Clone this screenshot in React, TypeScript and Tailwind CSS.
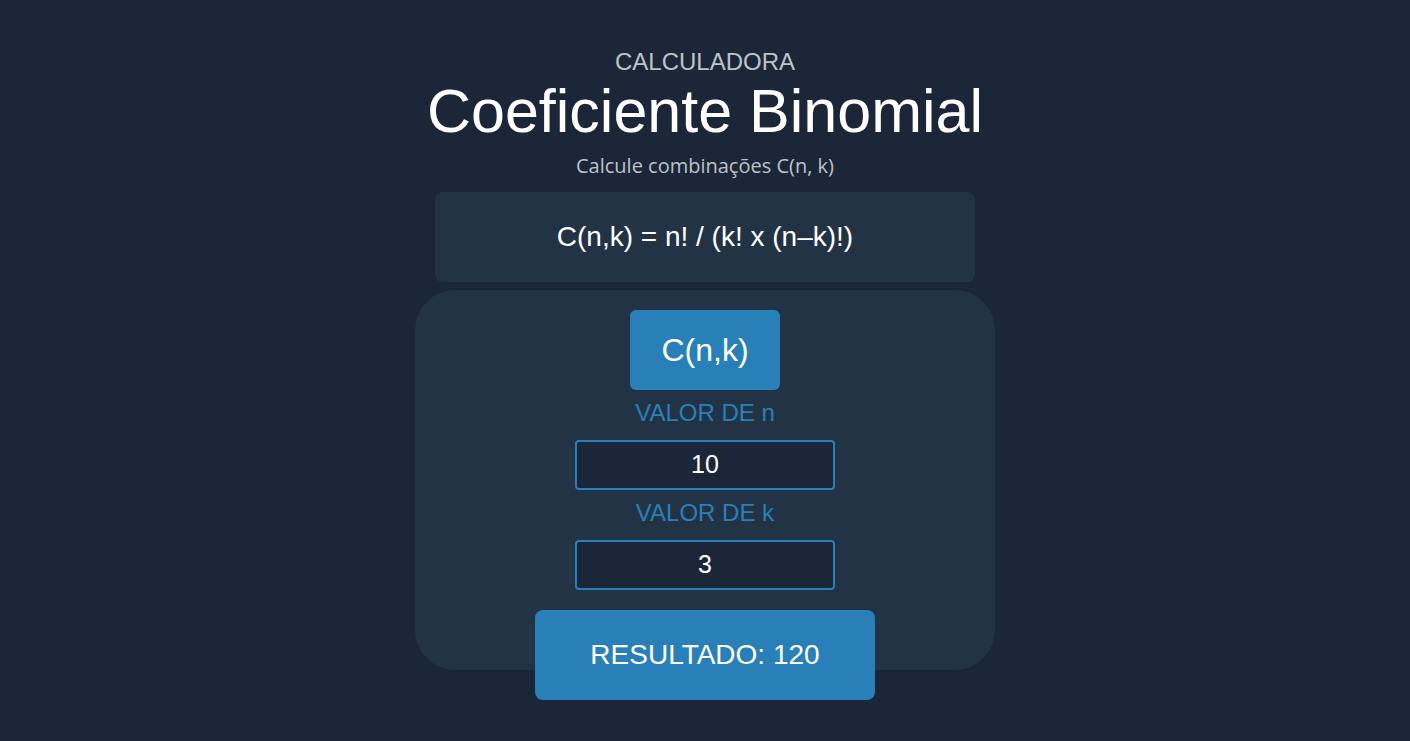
import React from "react";

export default function App() {
  const sans = { fontFamily: '"Liberation Sans", Arial, sans-serif' };
  return (
    <div className="min-h-[741px] w-full bg-[#1b2738] flex flex-col items-center text-white" style={sans}>
      <div className="mt-[48px] text-[24px] leading-[28px] text-[#bdc3c7]">CALCULADORA</div>
      <h1 className="mt-[3px] text-[61px] leading-[64px] text-white">Coeficiente Binomial</h1>
      <p className="mt-[10px] text-[20px] leading-[26px] text-[#bdc3c7]" style={{ fontFamily: '"Open Sans", sans-serif' }}>
        Calcule combinações C(n, k)
      </p>
      <div className="mt-[13px] w-[540px] h-[90px] rounded-[8px] bg-[#233346] flex items-center justify-center text-[28px]">
        C(n,k) = n! / (k! x (n–k)!)
      </div>
      <div className="mt-[8px] w-[580px] h-[380px] rounded-[40px] bg-[#233346] flex flex-col items-center pt-[20px]">
        <button className="shrink-0 w-[150px] h-[80px] rounded-[6px] bg-[#2980b9] text-white text-[32px]">C(n,k)</button>
        <label className="shrink-0 mt-[9px] text-[24px] leading-[28px] text-[#2980b9]">VALOR DE n</label>
        <div className="shrink-0 mt-[13px] w-[260px] h-[50px] rounded-[4px] border-2 border-[#2980b9] bg-[#1b2738] flex items-center justify-center text-[25px]">10</div>
        <label className="shrink-0 mt-[9px] text-[24px] leading-[28px] text-[#2980b9]">VALOR DE k</label>
        <div className="shrink-0 mt-[13px] w-[260px] h-[50px] rounded-[4px] border-2 border-[#2980b9] bg-[#1b2738] flex items-center justify-center text-[25px]">3</div>
        <button className="shrink-0 mt-[20px] w-[340px] h-[90px] rounded-[8px] bg-[#2980b9] text-white text-[28px]">RESULTADO: 120</button>
      </div>
    </div>
  );
}
